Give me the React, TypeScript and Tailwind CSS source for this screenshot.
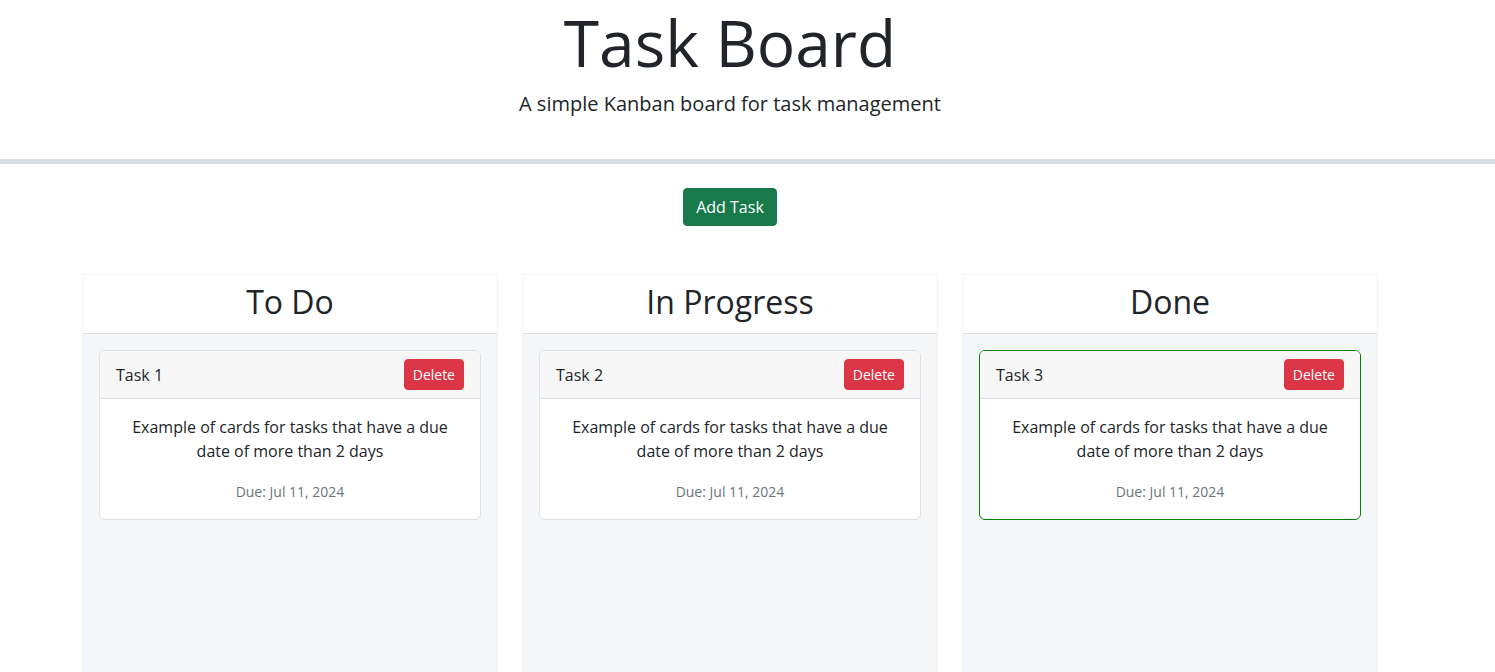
import React from "react";

type Task = { id: number; title: string; description: string; due: string; done?: boolean };

const columns: { name: string; tasks: Task[] }[] = [
  {
    name: "To Do",
    tasks: [{ id: 1, title: "Task 1", description: "Example of cards for tasks that have a due date of more than 2 days", due: "Jul 11, 2024" }],
  },
  {
    name: "In Progress",
    tasks: [{ id: 2, title: "Task 2", description: "Example of cards for tasks that have a due date of more than 2 days", due: "Jul 11, 2024" }],
  },
  {
    name: "Done",
    tasks: [{ id: 3, title: "Task 3", description: "Example of cards for tasks that have a due date of more than 2 days", due: "Jul 11, 2024", done: true }],
  },
];

function TaskCard({ task }: { task: Task }) {
  return (
    <div
      className={`rounded-[6px] border bg-white overflow-hidden ${
        task.done ? "border-[#008000]" : "border-[#dee2e6]"
      }`}
    >
      <div className="flex items-center justify-between bg-[#f7f7f7] border-b border-[#dee2e6] px-4 py-2">
        <span className="text-base leading-6">{task.title}</span>
        <button className="rounded-[4px] bg-[#dc3545] border border-[#dc3545] px-2 py-1 text-sm leading-[21px] text-white">
          Delete
        </button>
      </div>
      <div className="p-4 pb-[15px] text-center">
        <p className="mb-4 text-base leading-6">{task.description}</p>
        <p className="pt-px text-sm leading-6 text-[#6c757d]">Due: {task.due}</p>
      </div>
    </div>
  );
}

export default function App() {
  return (
    <div className="min-h-screen w-[1460px] bg-white text-[#212529] font-['Open_Sans',sans-serif]">
      <header className="pt-[5px] text-center">
        <h1 className="text-[64px] leading-[1.2] font-normal">Task Board</h1>
        <p className="mt-[7px] text-xl leading-[30px]">A simple Kanban board for task management</p>
      </header>

      <hr className="mt-[40px] border-0 h-[5px] bg-[#d8dde2] w-[1495px]" />

      <div className="flex justify-center mt-6">
        <button className="rounded-[4px] bg-[#187a4b] border border-[#187a4b] px-3 py-1.5 text-base leading-6 text-white">
          Add Task
        </button>
      </div>

      <div className="mt-12 flex justify-center gap-6">
        {columns.map((col) => (
          <div key={col.name} className="w-[416px] border border-[#f1f2f3] border-b-0">
            <div className="bg-white border-b border-[#dee2e6] pt-2 pb-3 text-center">
              <h2 className="text-[32px] leading-[1.2]">{col.name}</h2>
            </div>
            <div className="bg-[#f5f6f8] p-4 min-h-[400px] flex flex-col gap-4">
              {col.tasks.map((t) => (
                <TaskCard key={t.id} task={t} />
              ))}
            </div>
          </div>
        ))}
      </div>
    </div>
  );
}
